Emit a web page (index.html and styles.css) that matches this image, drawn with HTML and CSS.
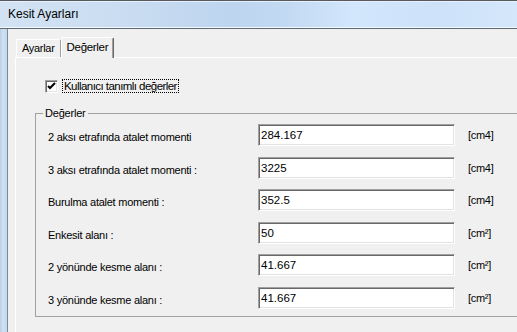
FILE: index.html
```html
<!DOCTYPE html>
<html lang="tr">
<head>
    <meta charset="UTF-8">
    <title>Kesit Ayarları</title>
    <link rel="stylesheet" href="styles.css">
</head>
<body>
<div class="window">
    <div class="titlebar">Kesit Ayarları</div>
    <div class="main">
        <div class="frame"></div>
        <div class="client">
            <div class="tabs">
                <span class="tab">Ayarlar</span>
                <span class="tab active">Değerler</span>
            </div>
            <div class="panel">
                <label class="check">
                    <span class="box">
                        <svg width="9" height="9" viewBox="0 0 9 9"><polyline points="1,4 3,6 8,1" fill="none" stroke="#000" stroke-width="2"/></svg>
                    </span>
                    <span class="focus">Kullanıcı tanımlı değerler</span>
                </label>

                <fieldset class="group">
                    <legend>Değerler</legend>
                    <div class="rows">
                        <span class="lbl">2 aksı etrafında atalet momenti</span>
                        <input class="val" type="text" value="284.167">
                        <span class="unit">[cm4]</span>

                        <span class="lbl">3 aksı etrafında atalet momenti :</span>
                        <input class="val" type="text" value="3225">
                        <span class="unit">[cm4]</span>

                        <span class="lbl">Burulma atalet momenti :</span>
                        <input class="val" type="text" value="352.5">
                        <span class="unit">[cm4]</span>

                        <span class="lbl">Enkesit alanı :</span>
                        <input class="val" type="text" value="50">
                        <span class="unit">[cm²]</span>

                        <span class="lbl">2 yönünde kesme alanı :</span>
                        <input class="val" type="text" value="41.667">
                        <span class="unit">[cm²]</span>

                        <span class="lbl">3 yönünde kesme alanı :</span>
                        <input class="val" type="text" value="41.667">
                        <span class="unit">[cm²]</span>
                    </div>
                </fieldset>
            </div>
        </div>
    </div>
</div>
</body>
</html>
```

FILE: styles.css
```css
* {
    box-sizing: border-box;
}

body {
    margin: 0;
    width: 517px;
    height: 332px;
    overflow: hidden;
    background: #f0f0f0;
    font-family: "Liberation Sans", Arial, sans-serif;
    font-size: 11px;
    color: #000;
}

.window {
    display: flex;
    flex-direction: column;
    height: 332px;
}

.titlebar {
    height: 28px;
    padding-left: 8px;
    border-top: 1px solid #575b60;
    border-bottom: 1px solid #f4f9ff;
    box-shadow: inset 0 1px 0 #e6f0fb;
    background: linear-gradient(to right, #d3e3f4 0%, #c9dcf1 25%, #bdd5ef 45%, #c2d9f2 55%, #d2e6fc 68%, #cde2f9 85%, #d4e7fb 100%);
    font-size: 12px;
    line-height: 26px;
}

.main {
    display: flex;
    flex: 1;
    min-height: 0;
    border-top: 1px solid #5f6a77;
}

.frame {
    flex-shrink: 0;
    width: 8px;
    background: linear-gradient(to right, #b9cde4, #cfe0f2 40%, #c4d8ee);
    border-right: 1px solid #7c8a9a;
}

.client {
    flex: 1;
    min-width: 0;
    display: flex;
    flex-direction: column;
    padding: 8px 0 0 7px;
    background: #f0f0f0;
}

/* tabs */
.tabs {
    display: flex;
    align-items: flex-end;
    height: 20px;
}

.tab {
    height: 18px;
    padding: 0 5px 0 5px;
    line-height: 16px;
    letter-spacing: -0.3px;
    border-top: 1px solid #fff;
    border-left: 1px solid #fff;
    border-right: 1px solid #a0a0a0;
    border-radius: 2px 2px 0 0;
}

.tab:first-child {
    margin-left: 1px;
}

.tab.active {
    position: relative;
    z-index: 1;
    height: 21px;
    margin-bottom: -1px;
    padding: 0 5px 0 5px;
    line-height: 18px;
    font-size: 11.5px;
    background: #f0f0f0;
    border-right: 1px solid #696969;
    box-shadow: inset -1px 0 0 #a0a0a0;
}

.panel {
    flex: 1;
    padding: 21px 0 0 19px;
    border-top: 1px solid #fff;
    border-left: 1px solid #fff;
}

/* checkbox */
.check {
    display: flex;
    align-items: center;
    gap: 4px;
    margin-left: 10px;
}

.box {
    width: 13px;
    height: 13px;
    display: flex;
    align-items: center;
    justify-content: center;
    background: #fff;
    border: 1px solid;
    border-color: #a0a0a0 #fff #fff #a0a0a0;
    box-shadow: inset 1px 1px 0 #696969, inset -1px -1px 0 #e3e3e3;
}

.focus {
    padding: 0 1px;
    line-height: 12px;
    font-size: 11.5px;
    letter-spacing: -0.55px;
    border: 1px dotted #000;
}

/* group box */
.group {
    width: 520px;
    min-width: 0;
    margin: 14px 0 0 0;
    padding: 4px 0 7px 12px;
    border: 1px solid #a0a0a0;
}

.group legend {
    padding: 0 2px;
    margin-left: -5px;
    line-height: 13px;
    font-size: 11px;
    letter-spacing: -0.2px;
}

.rows {
    display: grid;
    grid-template-columns: 197px 197px auto;
    grid-auto-rows: 22px;
    column-gap: 13px;
    row-gap: 10.6px;
}

.lbl {
    padding-top: 7px;
    letter-spacing: -0.25px;
}

.val {
    width: 197px;
    height: 22px;
    margin: 0;
    padding: 0 2px;
    font-family: "Liberation Sans", Arial, sans-serif;
    font-size: 11.5px;
    background: #fff;
    border: 1px solid;
    border-color: #a0a0a0 #fff #fff #a0a0a0;
    box-shadow: inset 1px 1px 0 #696969, inset -1px -1px 0 #e3e3e3;
    outline: none;
}

.unit {
    padding-top: 5px;
    letter-spacing: -0.3px;
}
```
